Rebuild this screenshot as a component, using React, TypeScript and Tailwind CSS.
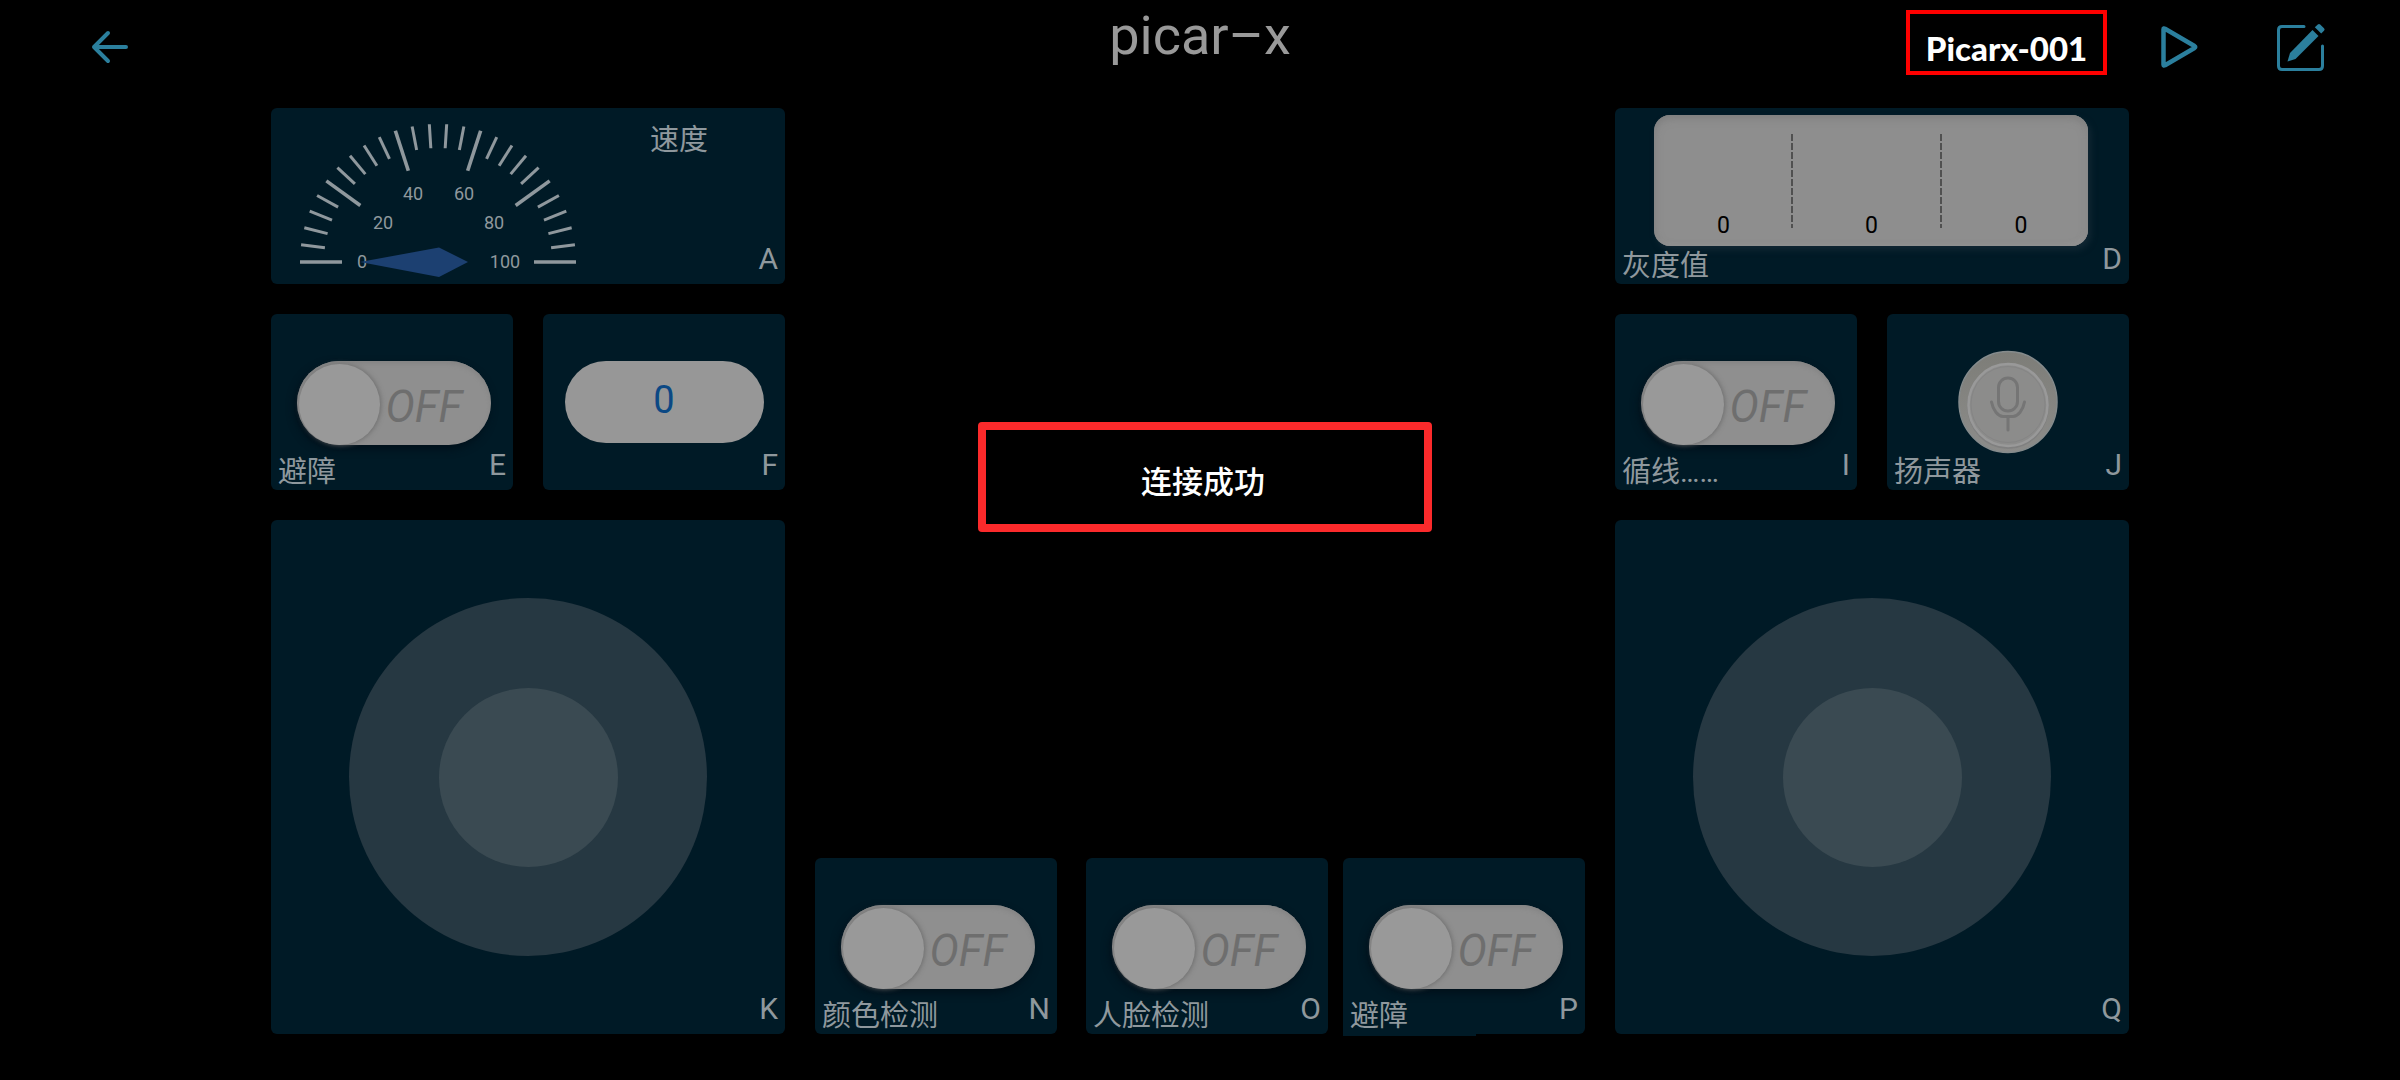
import { useState, type ReactNode } from "react";

const GAUGE_TICKS = Array.from({ length: 26 }, (_, i) => {
  const angle = Math.PI - (i / 25) * Math.PI;
  const major = i % 5 === 0;
  const inner = major ? 96 : 114;
  return {
    major,
    x1: 140 + 138 * Math.cos(angle),
    y1: 140 - 138 * Math.sin(angle),
    x2: 140 + inner * Math.cos(angle),
    y2: 140 - inner * Math.sin(angle),
  };
});

const GAUGE_LABELS = [
  { text: "0", x: 64, y: 146 },
  { text: "20", x: 85, y: 107 },
  { text: "40", x: 115, y: 78 },
  { text: "60", x: 166, y: 78 },
  { text: "80", x: 196, y: 107 },
  { text: "100", x: 207, y: 146 },
];

function Tile({
  slot,
  caption,
  captionId,
  className = "",
  children,
}: {
  slot: string;
  caption?: string;
  captionId?: string;
  className?: string;
  children: ReactNode;
}) {
  return (
    <section className={`relative grid rounded-md bg-[#001a26] ${className}`}>
      {children}
      <div className="pointer-events-none col-start-1 row-start-1 flex items-end justify-between self-end px-[7px] pb-[2px] text-[#8f989d]">
        <span id={captionId} className="text-[29px] leading-8">
          {caption}
        </span>
        <span className="mb-[7px] text-[30px] leading-8">{slot}</span>
      </div>
    </section>
  );
}

function SwitchTile({
  slot,
  caption,
  className = "",
  children,
}: {
  slot: string;
  caption: string;
  className?: string;
  children?: ReactNode;
}) {
  const [on, setOn] = useState(false);
  const captionId = `caption-${slot}`;
  return (
    <Tile slot={slot} caption={caption} captionId={captionId} className={`h-44 w-[242px] ${className}`}>
      <label
        className={`col-start-1 row-start-1 mt-[47px] ml-[3px] flex h-[84px] w-[194px] cursor-pointer justify-self-center rounded-full bg-[#8f8f8f] shadow-[inset_0_3px_4px_#858585,-2px_4px_8px_#00101a] ${
          on ? "flex-row-reverse" : ""
        }`}
      >
        <input
          type="checkbox"
          role="switch"
          checked={on}
          onChange={() => setOn(!on)}
          aria-labelledby={captionId}
          className="sr-only"
        />
        <span className="mx-[2px] size-[81px] shrink-0 self-end rounded-full bg-[#999999] shadow-[1px_0_5px_#6c6c6c]" />
        <span className="mt-2 ml-1 self-center text-[44px] leading-[44px] text-[#6e6e6e] italic">
          {on ? "ON" : "OFF"}
        </span>
      </label>
      {children}
    </Tile>
  );
}

function Gauge() {
  return (
    <svg
      role="meter"
      aria-label="速度"
      aria-valuemin={0}
      aria-valuemax={100}
      aria-valuenow={0}
      width="280"
      height="160"
      viewBox="0 0 280 160"
      className="mt-[14px] ml-[27px] shrink-0"
    >
      {GAUGE_TICKS.map((t, i) => (
        <line
          key={i}
          x1={t.x1}
          y1={t.y1}
          x2={t.x2}
          y2={t.y2}
          stroke="#8f989d"
          strokeWidth={t.major ? 3.6 : 3}
        />
      ))}
      {GAUGE_LABELS.map((l) => (
        <text key={l.text} x={l.x} y={l.y} textAnchor="middle" fontSize="18" fill="#8f989d">
          {l.text}
        </text>
      ))}
      <path d="M62 140 L141 125.500 L170 140 L141 155 Z" fill="#1c4071" />
    </svg>
  );
}

function Joystick({ slot }: { slot: string }) {
  return (
    <Tile slot={slot} className="aspect-square">
      <button
        type="button"
        aria-label={`摇杆 ${slot}`}
        className="col-start-1 row-start-1 grid size-[358px] place-items-center place-self-center rounded-full bg-[#263842]"
      >
        <span className="size-1/2 rounded-full bg-[#3a4a52]" />
      </button>
    </Tile>
  );
}

export default function App() {
  return (
    <div className="flex min-h-screen flex-col bg-black font-[Roboto,'Noto_Sans_CJK_SC',sans-serif]">
      <header className="grid h-[108px] grid-cols-[1fr_auto_1fr] items-start px-[74px]">
        <button type="button" aria-label="返回" className="mt-[27px] ml-4 w-10">
          <svg width="40" height="40" viewBox="0 0 40 40" fill="none" stroke="#2b7f9d" strokeWidth="4" strokeLinecap="round" strokeLinejoin="round">
            <path d="M36 20 H4 M18 6 L4 20 L18 34" />
          </svg>
        </button>
        <h1 className="mt-1 text-[54px] leading-[63px] text-[#999999]">picar–x</h1>
        <div className="flex items-center justify-end pt-[10px]">
          <div className="mr-[52px] flex h-[65px] w-[201px] items-center justify-center border-4 border-[#ff0000] pt-[10px] font-[Lato,sans-serif] text-[33px] leading-10 font-black text-white">
            Picarx-001
          </div>
          <button type="button" aria-label="运行" className="mr-[77px] mt-2">
            <svg width="40" height="44" viewBox="0 0 40 44" fill="none" stroke="#2b7f9d" strokeWidth="4.500" strokeLinejoin="round">
              <path d="M4.500 4.200 V39.800 Q4.500 41 6 40.300 L35.500 23 Q37 22 35.500 21 L6 3.700 Q4.500 3 4.500 4.200 Z" />
            </svg>
          </button>
          <button type="button" aria-label="编辑" className="mt-2">
            <svg width="50" height="50" viewBox="0 0 50 50" fill="none">
              <path
                d="M28 4.500 H6 Q2.500 4.500 2.500 8 V44 Q2.500 47.500 6 47.500 H43 Q46.500 47.500 46.500 44 V24"
                stroke="#2b7f9d"
                strokeWidth="3"
                strokeLinecap="round"
              />
              <path d="M36.500 8 L42.500 14 L19.500 37 L11.500 39.500 L14 31 Z" fill="#2b7f9d" />
              <path d="M38.800 5.300 L41.800 2.500 Q43 1.500 44.200 2.500 L48 6.200 Q49.300 7.500 48 8.700 L45.200 11.500 Z" fill="#2b7f9d" />
            </svg>
          </button>
        </div>
      </header>

      <main className="flex flex-1 gap-[30px] px-[271px]">
        <div className="flex w-[514px] flex-col gap-[30px]">
          <Tile slot="A" className="h-44">
            <div className="col-start-1 row-start-1 flex">
              <Gauge />
              <span className="mt-4 ml-[72px] text-[29px] leading-8 text-[#8f989d]">速度</span>
            </div>
          </Tile>
          <div className="flex justify-between">
            <SwitchTile slot="E" caption="避障" />
            <Tile slot="F" className="h-44 w-[242px]">
              <output className="col-start-1 row-start-1 mt-[47px] h-[82px] w-[199px] justify-self-center rounded-full bg-[#979797] text-center text-[38px] leading-[78px] text-[#0b4884]">
                0
              </output>
            </Tile>
          </div>
          <Joystick slot="K" />
        </div>

        <div className="flex h-[926px] flex-1 flex-col justify-between pt-[314px]">
          <div
            role="status"
            className="ml-[10px] flex h-[110px] w-[454px] items-center justify-center self-center rounded-sm border-8 border-[#fb2a2b] pt-3 pr-1 text-[31px] leading-9 font-medium text-white"
          >
            连接成功
          </div>
          <div className="flex justify-between">
            <div className="flex gap-[29px]">
              <SwitchTile slot="N" caption="颜色检测" />
              <SwitchTile slot="O" caption="人脸检测" />
            </div>
            <SwitchTile slot="P" caption="避障" className="rounded-bl-none">
              <span className="absolute top-full left-0 h-[2px] w-[133px] bg-[#001a26]" />
            </SwitchTile>
          </div>
        </div>

        <div className="flex w-[514px] flex-col gap-[30px]">
          <Tile slot="D" caption="灰度值" className="h-44">
            <div className="col-start-1 row-start-1 mt-[7px] ml-[39px] flex h-[131px] w-[434px] rounded-2xl bg-[#8e8e8e] pt-[19px] text-center text-[23px] leading-7 text-black shadow-[inset_0_3px_8px_#7c7c7c,inset_-2px_-2px_4px_#989898,3px_4px_6px_#112733]">
              <SensorColumn className="w-[139px]" divider />
              <SensorColumn className="w-[149px] pl-2" divider />
              <SensorColumn className="w-[146px] pl-3" />
            </div>
          </Tile>
          <div className="flex justify-between">
            <SwitchTile slot="I" caption="循线……" />
            <Tile slot="J" caption="扬声器" captionId="caption-J" className="h-44 w-[242px]">
              <button type="button" aria-labelledby="caption-J" className="col-start-1 row-start-1 mt-9 self-start justify-self-center">
                <svg width="104" height="104" viewBox="0 0 104 104" fill="none">
                  <defs>
                    <linearGradient id="mic-rim" x1="0" y1="0" x2="0" y2="1">
                      <stop offset="0" stopColor="#7d7d78" />
                      <stop offset="1" stopColor="#8c8c8a" />
                    </linearGradient>
                  </defs>
                  <ellipse cx="52" cy="52" rx="49" ry="50.500" fill="url(#mic-rim)" stroke="#858b8c" strokeWidth="1.500" />
                  <ellipse cx="52" cy="56" rx="41" ry="43" fill="#808080" />
                  <ellipse cx="52" cy="55" rx="39.500" ry="41" fill="#8c8c8b" stroke="#999999" strokeWidth="2.500" />
                  <ellipse cx="52" cy="54.500" rx="37" ry="38" stroke="#858585" strokeWidth="1" />
                  <g stroke="#757575" strokeWidth="3">
                    <rect x="42.500" y="28" width="19" height="33" rx="9.500" />
                    <path d="M35.500 52 C37 60 42 66.500 47 66.500 H57 C62 66.500 67 60 68.500 52" strokeLinecap="round" />
                    <path d="M52 66.500 V80" strokeLinecap="round" />
                  </g>
                </svg>
              </button>
            </Tile>
          </div>
          <Joystick slot="Q" />
        </div>
      </main>
    </div>
  );
}

function SensorColumn({ className = "", divider = false }: { className?: string; divider?: boolean }) {
  return (
    <div
      className={`flex h-[94px] items-end justify-center ${className} ${
        divider
          ? "bg-[repeating-linear-gradient(#505050_0_7px,#8e8e8e_7px_9px)] bg-[length:2px_100%] bg-right bg-no-repeat"
          : ""
      }`}
    >
      <output className="-mb-3">0</output>
    </div>
  );
}
